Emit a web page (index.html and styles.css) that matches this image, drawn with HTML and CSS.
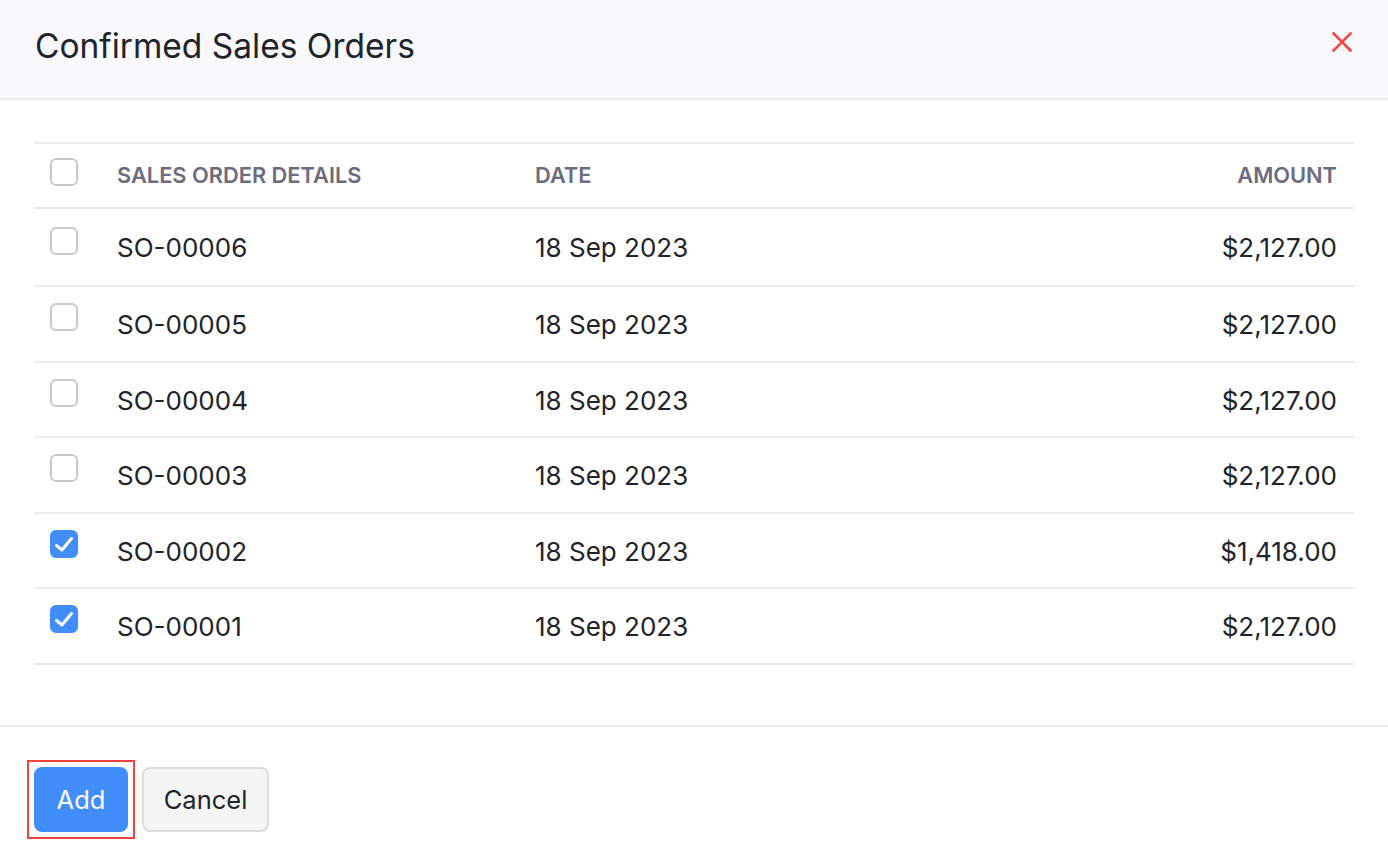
FILE: index.html
```html
<!DOCTYPE html>
<html>
<head>
<meta charset="utf-8">
<link rel="stylesheet" href="styles.css">
</head>
<body>
<div class="modal">
  <div class="modal-header">
    <h1 class="title">Confirmed Sales Orders</h1>
    <button class="close" aria-label="Close">
      <svg width="20" height="20" viewBox="0 0 20 20"><path d="M1.5 1.5 L18.5 18.5 M18.5 1.5 L1.5 18.5" stroke="#f44545" stroke-width="2.6" stroke-linecap="square"/></svg>
    </button>
  </div>
  <div class="modal-body">
    <table class="orders">
      <thead>
        <tr>
          <th class="col-check"><span class="cb"></span></th>
          <th class="col-details">Sales Order Details</th>
          <th class="col-date">Date</th>
          <th class="col-amount">Amount</th>
        </tr>
      </thead>
      <tbody>
        <tr class="first"><td class="col-check"><span class="cb"></span></td><td>SO-00006</td><td>18 Sep 2023</td><td class="col-amount">$2,127.00</td></tr>
        <tr><td class="col-check"><span class="cb"></span></td><td>SO-00005</td><td>18 Sep 2023</td><td class="col-amount">$2,127.00</td></tr>
        <tr><td class="col-check"><span class="cb"></span></td><td>SO-00004</td><td>18 Sep 2023</td><td class="col-amount">$2,127.00</td></tr>
        <tr><td class="col-check"><span class="cb"></span></td><td>SO-00003</td><td>18 Sep 2023</td><td class="col-amount">$2,127.00</td></tr>
        <tr><td class="col-check"><span class="cb checked"><svg width="28" height="28" viewBox="0 0 28 28"><path d="M6.5 15.5 L12 20 L21.5 8.5" fill="none" stroke="#fff" stroke-width="3" stroke-linecap="round" stroke-linejoin="round"/></svg></span></td><td>SO-00002</td><td>18 Sep 2023</td><td class="col-amount">$1,418.00</td></tr>
        <tr><td class="col-check"><span class="cb checked"><svg width="28" height="28" viewBox="0 0 28 28"><path d="M6.5 15.5 L12 20 L21.5 8.5" fill="none" stroke="#fff" stroke-width="3" stroke-linecap="round" stroke-linejoin="round"/></svg></span></td><td>SO-00001</td><td>18 Sep 2023</td><td class="col-amount">$2,127.00</td></tr>
      </tbody>
    </table>
  </div>
  <div class="modal-footer">
    <div class="highlight"><button class="btn btn-primary">Add</button></div>
    <button class="btn btn-secondary">Cancel</button>
  </div>
</div>
</body>
</html>
```

FILE: styles.css
```css
html, body {
  margin: 0;
  padding: 0;
  background: #ffffff;
  font-family: Inter, "Noto Sans", "Liberation Sans", sans-serif;
  color: #21263c;
}

.modal {
  width: 1388px;
  height: 864px;
  display: flex;
  flex-direction: column;
}

.modal-header {
  height: 100px;
  box-sizing: border-box;
  background: #f9f9fb;
  border-bottom: 2px solid #ebebef;
  display: flex;
  align-items: center;
  justify-content: space-between;
  padding: 0 36px 0 35px;
}

.title {
  margin: 0;
  font-size: 33.5px;
  font-weight: 400;
  color: #21232b;
  letter-spacing: 0;
  position: relative;
  top: -3px;
}

.close {
  border: 0;
  background: transparent;
  padding: 0;
  width: 20px;
  height: 20px;
  display: flex;
  position: relative;
  top: -7px;
  cursor: pointer;
}

.modal-body {
  padding: 42px 34px 0 34px;
  height: 627px;
  box-sizing: border-box;
  border-bottom: 2px solid #ebebef;
}

.orders {
  width: 100%;
  border-collapse: collapse;
  border-top: 2px solid #ebebef;
}

.orders th,
.orders td {
  border-bottom: 2px solid #ebebef;
  text-align: left;
  vertical-align: top;
  padding: 0;
}

.orders th {
  height: 65px;
  font-size: 21.8px;
  font-weight: 600;
  color: #6c6c7e;
  text-transform: uppercase;
  letter-spacing: 0;
  padding-top: 18px;
  box-sizing: border-box;
}

.orders td {
  height: 75.6px;
  font-size: 26px;
  font-weight: 400;
  color: #21232b;
  padding-top: 22px;
  box-sizing: border-box;
}

.orders tr.first td {
  height: 78px;
  padding-top: 23px;
}

.col-check {
  width: 83px;
  padding-left: 16px !important;
}

.col-details {
  width: 418px;
}

.col-date {
  width: 300px;
}

.orders .col-amount {
  text-align: right;
  padding-right: 17px;
}

.cb {
  display: inline-flex;
  align-items: center;
  justify-content: center;
  position: relative;
  box-sizing: border-box;
  width: 28px;
  height: 28px;
  border: 2px solid #c9c9cc;
  border-radius: 6px;
  background: #fff;
  vertical-align: top;
}

.orders th .cb {
  margin-top: -4px;
}

.orders td .cb {
  margin-top: -6px;
}

.orders tr.first td .cb {
  margin-top: -5px;
}

.cb svg {
  position: absolute;
  left: -2px;
  top: -2px;
}

.cb.checked {
  background: #408dfb;
  border-color: #408dfb;
}

.modal-footer {
  display: flex;
  align-items: center;
  gap: 7px;
  padding: 33px 0 0 27px;
}

.highlight {
  border: 2px solid #f04040;
  padding: 5px;
  display: flex;
}

.btn {
  font-family: Inter, "Noto Sans", "Liberation Sans", sans-serif;
  font-size: 25.5px;
  height: 65px;
  border-radius: 8px;
  cursor: pointer;
}

.btn-primary {
  background: #408dfb;
  color: #fff;
  border: 0;
  width: 94px;
}

.btn-secondary {
  background: #f4f4f4;
  color: #21232b;
  border: 2px solid #dcdcdc;
  width: 127px;
}
```
